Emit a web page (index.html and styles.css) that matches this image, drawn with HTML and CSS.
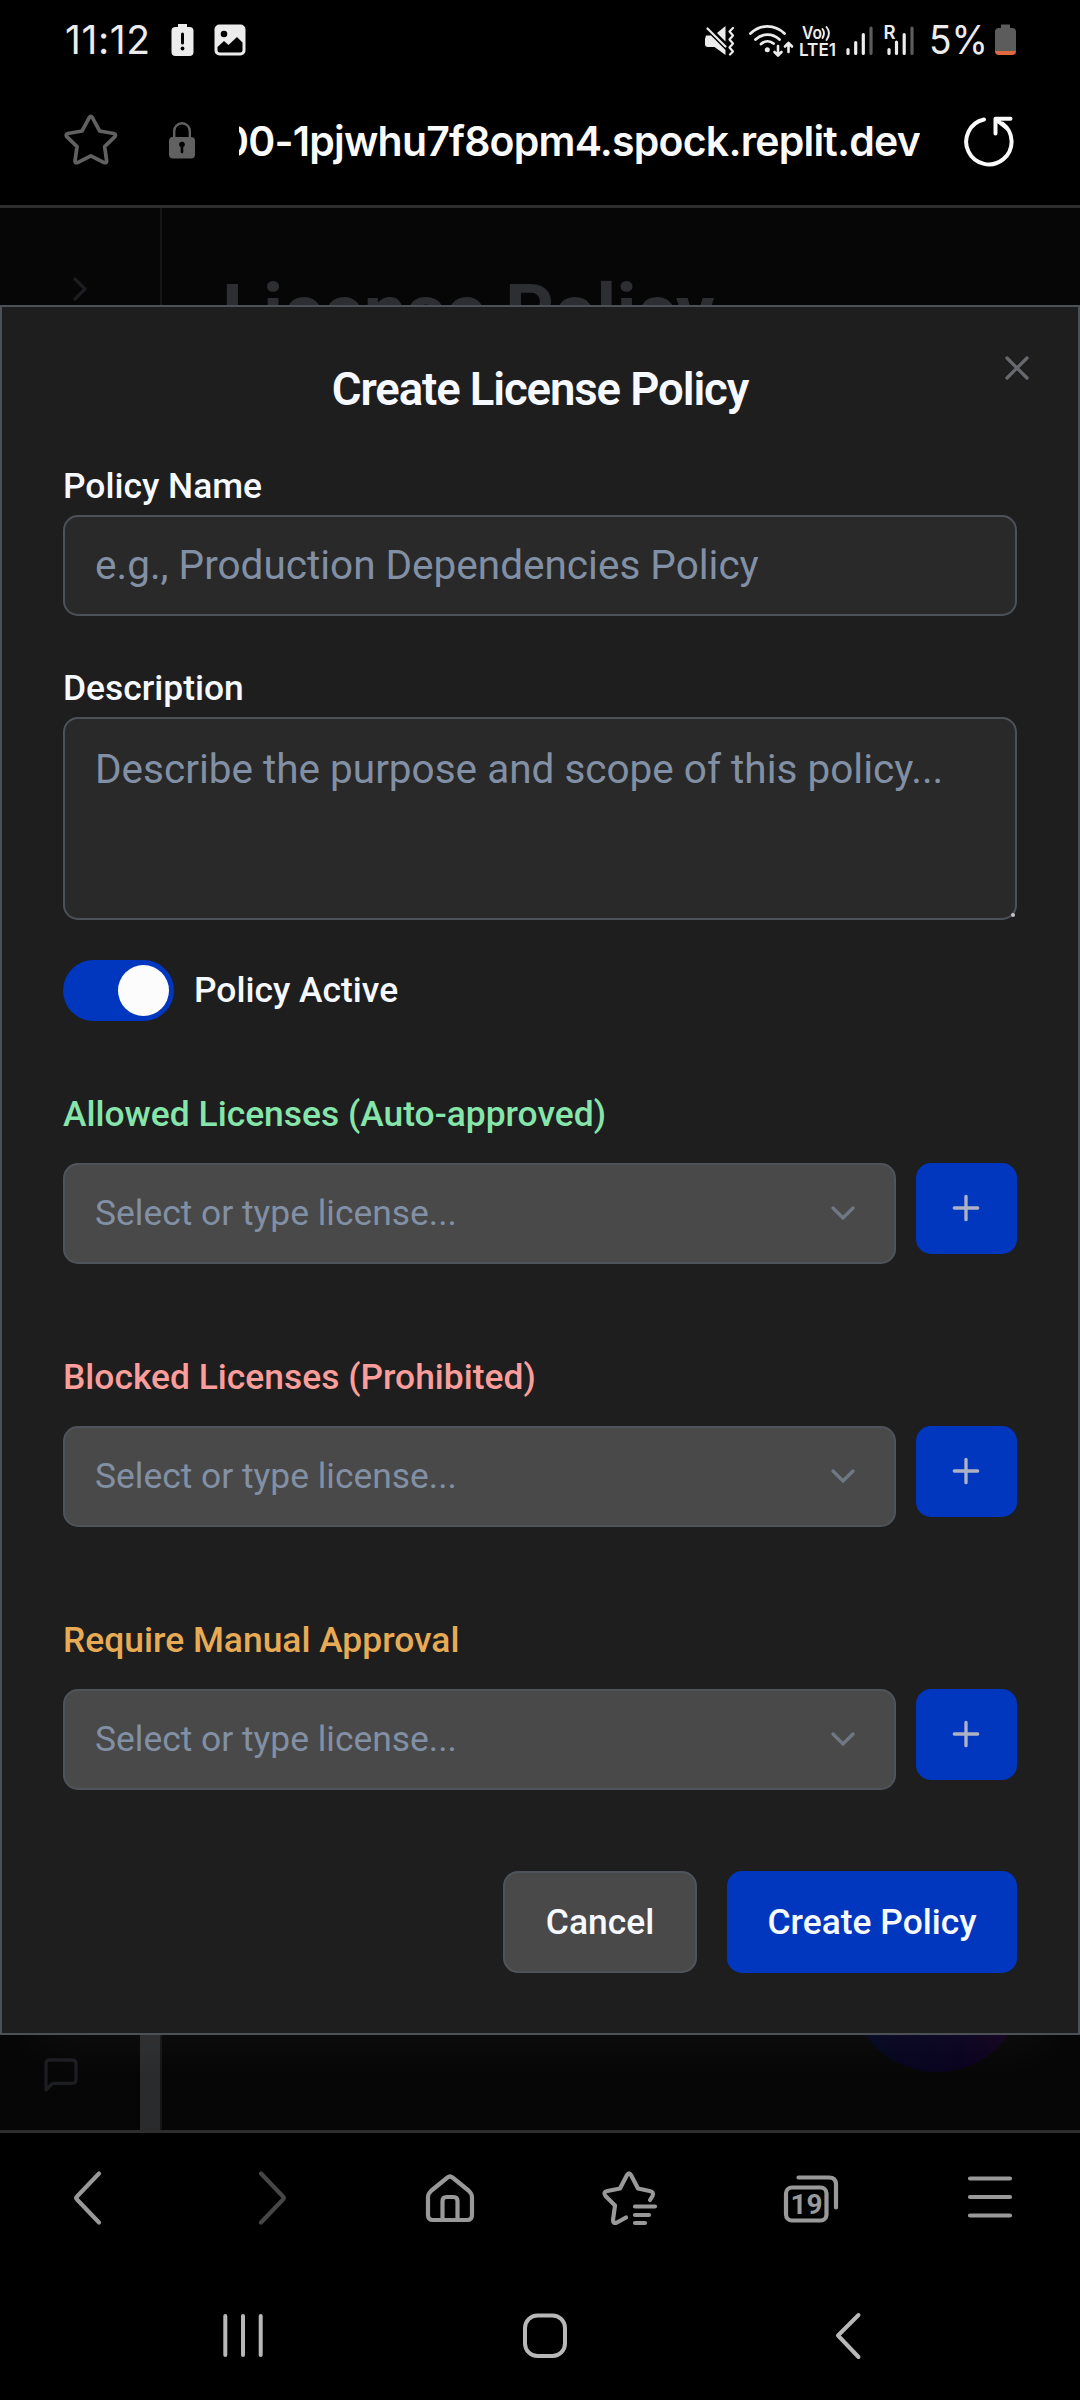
FILE: index.html
```html
<!DOCTYPE html>
<html lang="en">
<head>
<meta charset="utf-8">
<title>License Policy</title>
<link rel="stylesheet" href="styles.css">
</head>
<body>
<div class="status-bar">
  <span class="clock">11:12</span>
  <svg class="status-alert" width="23" height="34" viewBox="0 0 23 34"><path fill="#ececec" d="M7 1h9v3h2.500a4 4 0 0 1 4 4v21a4 4 0 0 1-4 4h-14a4 4 0 0 1-4-4V8a4 4 0 0 1 4-4H7z"/><path stroke="#000" stroke-width="3" stroke-linecap="round" d="M11.500 11v9"/><circle cx="11.500" cy="25.500" r="1.900"/></svg>
  <svg class="status-image" width="32" height="32" viewBox="0 0 32 32"><rect x=".5" y=".5" width="31" height="31" rx="5" fill="#ececec"/><circle cx="10" cy="10" r="3.300"/><path d="M3.500 23l6.500-6 4.500 4 8.500-8 5.500 5.500V26a2.500 2.500 0 0 1-2.500 2.500H6A2.500 2.500 0 0 1 3.500 26z"/></svg>
  <svg class="status-icons" width="330" height="60" viewBox="0 0 330 60">
    <g fill="#ececec">
      <path d="M11 25.500h5L30.500 40v5L19.500 37H13a3 3 0 0 1-3-3v-5zM22 23l8.500-7v15.500z"/>
    </g>
    <g fill="none" stroke="#ececec" stroke-linecap="round" stroke-linejoin="round">
      <path stroke-width="2.200" d="M12.500 18.500l18 18"/>
      <path stroke-width="2.200" d="M38 18l-3.500 3.500 3.500 4-3.500 4 3.500 4-3.500 4 3.500 4-3 3"/>
      <path stroke-width="2.800" d="M55.500 23.500c10-9.500 24-9.500 34 0M60.500 29.500c7-6.500 17-6.500 24 0M66 34c4-3.500 9-3.500 12.500-.5"/>
      <path stroke-width="2.600" d="M83 36v9M79.500 42l3.500 3.500 3.500-3.500M93.500 42v-9M90 36.500l3.500-3.500 3.500 3.500"/>
      <path stroke-width="1.900" d="M127.500 19q3 4 0 9M131.500 17q5 6 0 13"/>
      <path stroke-width="3.200" d="M153 39.500v4M160.700 32.500v11M168.300 24.500v19M194 39.500v4M201.500 32v11.500M209.200 24.500v19"/>
      <path stroke="#5c5c5c" stroke-width="3.200" d="M176 18v25.500M217 18v25.500"/>
    </g>
    <circle cx="72.300" cy="39.800" r="2.500" fill="#ececec"/>
    <g class="status-text">
      <text x="107" y="29" font-size="17.500" textLength="20" lengthAdjust="spacingAndGlyphs">Vo</text>
      <text x="104" y="46" font-size="17.500" textLength="37" lengthAdjust="spacingAndGlyphs">LTE1</text>
      <text x="188.500" y="29" font-size="18.500">R</text>
      <text class="percent" x="234" y="44" font-size="39" textLength="59" lengthAdjust="spacingAndGlyphs">5%</text>
    </g>
    <path fill="#5c5c5c" d="M306 14.500h9V18h2a4 4 0 0 1 4 4v19h-21V22a4 4 0 0 1 4-4h2z"/>
    <path fill="#df6a40" d="M300 41h21a4 4 0 0 1-4 4h-13a4 4 0 0 1-4-4z"/>
  </svg>
</div>
<div class="address-bar">
  <svg class="bookmark" width="56" height="56" viewBox="0 0 56 56"><path fill="none" stroke="#616161" stroke-width="4" stroke-linejoin="round" d="M25.300 4.500q1.700-3 3.400 0L36.500 19l15.500 2.700q3 1 1.200 3.500L42 36l2.200 15.500q0 2.800-2.800 1.800L27 46l-14.400 7.300q-2.800 1-2.800-1.800L12 36 .8 25.200Q-1 22.700 2 21.700L17.500 19z" transform="translate(3 .5) scale(.92)"/></svg>
  <svg class="lock" width="28" height="38" viewBox="0 0 28 38"><path fill="none" stroke="#616161" stroke-width="2.400" d="M6.200 16V9a7.800 7.800 0 0 1 15.600 0v7"/><rect x="1" y="15" width="26" height="21.500" rx="4" fill="#616161"/><circle cx="14" cy="22.500" r="2.800"/><path stroke="#000" stroke-width="2.600" stroke-linecap="round" d="M14 24v6"/></svg>
  <div class="url"><span>00-1pjwhu7f8opm4.spock.replit.dev</span></div>
  <svg class="reload" width="52" height="52" viewBox="0 0 52 52" fill="none" stroke="#fafafa" stroke-width="4" stroke-linecap="round" stroke-linejoin="round"><path d="M21 4.500a22.700 22.700 0 1 0 18.500 4"/><path d="M32.500 18.500V3.800H47.500M33 4.500l10 8"/></svg>
</div>

<main class="page">
  <aside class="sidebar">
    <svg class="expand" width="40" height="40" viewBox="0 0 24 24"><path d="M9 18l6-6-6-6"/></svg>
    <svg class="chat" width="40" height="40" viewBox="0 0 24 24"><path d="M21 15a2 2 0 0 1-2 2H7l-4 4V5a2 2 0 0 1 2-2h14a2 2 0 0 1 2 2z"/></svg>
  </aside>
  <div class="scroll-thumb"></div>
  <h1 class="page-title">License Policy</h1>
  <div class="fab"></div>

  <form class="dialog">
    <button type="button" class="close" aria-label="Close"><svg width="40" height="40" viewBox="0 0 24 24"><path d="M18 6L6 18M6 6l12 12"/></svg></button>
    <h2>Create License Policy</h2>
    <div class="field">
      <label for="name">Policy Name</label>
      <input id="name" class="control" placeholder="e.g., Production Dependencies Policy">
    </div>
    <div class="field">
      <label for="desc">Description</label>
      <div class="area"><textarea id="desc" class="control" placeholder="Describe the purpose and scope of this policy..."></textarea><i class="grip"></i></div>
    </div>
    <div class="toggle-row"><span class="switch"><i></i></span><span>Policy Active</span></div>

    <section class="licenses allowed">
      <h3>Allowed Licenses (Auto-approved)</h3>
      <div class="picker">
        <div class="select"><span>Select or type license...</span><svg width="40" height="40" viewBox="0 0 24 24"><path d="M6 9l6 6 6-6"/></svg></div>
        <button type="button" class="add" aria-label="Add"><svg width="40" height="40" viewBox="0 0 24 24"><path d="M5 12h14M12 5v14"/></svg></button>
      </div>
    </section>
    <section class="licenses blocked">
      <h3>Blocked Licenses (Prohibited)</h3>
      <div class="picker">
        <div class="select"><span>Select or type license...</span><svg width="40" height="40" viewBox="0 0 24 24"><path d="M6 9l6 6 6-6"/></svg></div>
        <button type="button" class="add" aria-label="Add"><svg width="40" height="40" viewBox="0 0 24 24"><path d="M5 12h14M12 5v14"/></svg></button>
      </div>
    </section>
    <section class="licenses manual">
      <h3>Require Manual Approval</h3>
      <div class="picker">
        <div class="select"><span>Select or type license...</span><svg width="40" height="40" viewBox="0 0 24 24"><path d="M6 9l6 6 6-6"/></svg></div>
        <button type="button" class="add" aria-label="Add"><svg width="40" height="40" viewBox="0 0 24 24"><path d="M5 12h14M12 5v14"/></svg></button>
      </div>
    </section>

    <div class="actions">
      <button type="button" class="btn cancel">Cancel</button>
      <button type="button" class="btn create">Create Policy</button>
    </div>
  </form>
</main>

<nav class="toolbar">
  <svg width="64" height="64" viewBox="0 0 64 64"><path d="M41 7.500L19 30.500q-1.500 1.500 0 3L41 56.500"/></svg>
  <svg class="disabled" width="64" height="64" viewBox="0 0 64 64"><path d="M23 7.500L45 30.500q1.500 1.500 0 3L23 56.500"/></svg>
  <svg width="64" height="64" viewBox="0 0 64 64"><path d="M29.500 11.500q2.500-2 5 0L50.500 24.500q3.500 3 3.500 7V49q0 5-5 5H15q-5 0-5-5V31.500q0-4 3.500-7zM24.500 54V35q0-4 4-4h7q4 0 4 4V54"/></svg>
  <svg width="64" height="64" viewBox="-2 0 64 64"><path d="M48.500 34l2.500-4q2-4-3-5L36.500 22.500 29.500 9q-2-3.500-4 0L18.500 22.500 6 25q-5 1-2 5L13.500 39.500 11.500 54q0 4 4 2.500L24.500 51.500" transform="translate(1.500 0)"/><path d="M35 40.500h20M35 49h14M35 57h10"/></svg>
  <svg width="64" height="64" viewBox="-2 0 64 64"><rect x="6" y="21.500" width="40.500" height="33" rx="6"/><path d="M18.500 11.500H49q7 0 7 7V41.500"/><text x="26.500" y="48" text-anchor="middle">19</text></svg>
  <svg width="64" height="64" viewBox="0 0 64 64"><path d="M12 12.500h40M12 31h40M12 49.500h40"/></svg>
</nav>
<nav class="system-nav">
  <svg width="64" height="64" viewBox="0 0 64 64"><path d="M14.300 12v39M32 12v39M49.700 12v39"/></svg>
  <svg width="64" height="64" viewBox="0 0 64 64"><rect x="12" y="11.500" width="40" height="40.500" rx="12.500"/></svg>
  <svg width="64" height="64" viewBox="0 0 64 64"><path d="M43.500 11L23 31.500 43.500 53"/></svg>
</nav>
</body>
</html>
```
FILE: styles.css
```css
* { box-sizing: border-box; }
body {
  margin: 0;
  width: 1080px;
  height: 2400px;
  overflow: hidden;
  background: #000;
  font-family: Roboto, "Liberation Sans", sans-serif;
  display: flex;
  flex-direction: column;
}
svg { display: block; flex: none; }
h1, h2, h3 { margin: 0; }
button { padding: 0; border: 0; font-family: inherit; }

/* Phone status bar */
.status-bar {
  height: 80px;
  display: flex;
  align-items: center;
  padding-left: 65px;
}
.clock {
  width: 106px;
  font: 400 39px/40px Inter, sans-serif;
  letter-spacing: 0.6px;
  color: #ececec;
}
.status-image { margin-left: 20px; }
.status-icons { margin-left: 449px; }
.status-text { fill: #ececec; font-family: Inter, sans-serif; font-weight: 600; }
.status-text .percent { font-weight: 400; }

/* Address bar */
.address-bar {
  height: 128px;
  padding: 0 0 3px 63px;
  border-bottom: 3px solid #2d2d2d;
  display: flex;
  align-items: center;
}
.lock { margin-left: 49px; }
.url {
  width: 681px;
  margin-left: 43px;
  display: flex;
  justify-content: flex-end;
  overflow: hidden;
  font: 600 41px/60px Inter, sans-serif;
  letter-spacing: -0.8px;
  color: #fafafa;
  white-space: nowrap;
}
.reload { margin-left: 43px; }

/* Web page behind the dialog */
.page {
  position: relative;
  height: 1922px;
  background: #060606;
  overflow: hidden;
}
.sidebar {
  width: 162px;
  height: 100%;
  border-right: 2px solid #151515;
  display: flex;
  flex-direction: column;
  justify-content: space-between;
  padding: 61px 41px 35px 60px;
}
.sidebar svg { fill: none; stroke: #1c1d20; stroke-width: 2; stroke-linecap: round; stroke-linejoin: round; }
.sidebar .chat { margin-left: -19px; }
.scroll-thumb { position: absolute; left: 140px; bottom: 0; width: 20px; height: 400px; background: #2a2b2c; }
.page-title {
  position: absolute;
  left: 222px;
  top: 60px;
  font-size: 75.9px;
  line-height: 90px;
  color: #2d2e32;
  white-space: nowrap;
}
.fab {
  position: absolute;
  left: 849px;
  bottom: 58px;
  width: 176px;
  height: 176px;
  border-radius: 50%;
  background: linear-gradient(90deg, #030720, #09021f 65%, #14021a);
}

/* Dialog */
.dialog {
  position: absolute;
  top: 97px;
  left: 0;
  width: 1080px;
  height: 1730px;
  padding: 60px 61px 0;
  border: 2px solid #4c5157;
  background: #1e1e1e;
  box-shadow: 0 45px 50px -30px rgba(255, 255, 255, 0.04);
  color: #f6f9ff;
}
.close {
  position: absolute;
  top: 41px;
  right: 41px;
  background: none;
  color: #67696f;
}
.close svg, .select svg, .add svg { fill: none; stroke: currentColor; stroke-width: 2; stroke-linecap: round; }
.dialog h2 {
  font-size: 45.5px;
  line-height: 46px;
  font-weight: 600;
  letter-spacing: -1.1px;
  text-align: center;
}
.field { margin-top: 55px; }
h2 + .field { margin-top: 56px; }
.field label, .toggle-row, .licenses h3, .btn {
  font-size: 35.4px;
  line-height: 35px;
  font-weight: 500;
}
.field label { display: block; margin-bottom: 11px; }
.control {
  display: block;
  width: 100%;
  height: 101px;
  padding: 0 30px 2px;
  border: 2px solid #4d5259;
  border-radius: 15px;
  background: #292929;
  font: 400 40.5px/60px Roboto, "Liberation Sans", sans-serif;
  color: #f6f9ff;
}
.control::placeholder { color: #8290a5; opacity: 1; }
.area { position: relative; }
textarea.control { height: 203px; padding-top: 20px; resize: none; overflow: hidden; }
.grip {
  position: absolute;
  right: 2px;
  bottom: 3px;
  width: 4px;
  height: 4px;
  border-radius: 2px;
  background: #c4c4c4;
}
.toggle-row { display: flex; align-items: center; gap: 20px; height: 61px; margin-top: 40px; }
.switch { width: 111px; height: 61px; padding: 5px; border-radius: 31px; background: #0136bf; display: flex; justify-content: flex-end; }
.switch i { width: 51px; height: 51px; border-radius: 50%; background: #fcfcfc; }

.licenses { margin-top: 96px; }
.allowed { margin-top: 76px; }
.licenses h3 { margin-bottom: 31px; }
.allowed h3 { color: #86e5aa; }
.blocked h3 { color: #fa9d9b; }
.manual h3 { color: #e8ab55; }
.picker { display: flex; align-items: flex-start; gap: 20px; }
.select {
  flex: 1;
  height: 101px;
  display: flex;
  align-items: center;
  justify-content: space-between;
  padding: 0 31px 1px 30px;
  border: 2px solid #4f545b;
  border-radius: 15px;
  background: #494949;
  font-size: 35.4px;
  color: #8290a5;
}
.select svg { color: #6f7884; }
.add {
  width: 101px;
  height: 91px;
  padding: 0 1px 1px 0;
  border-radius: 15px;
  background: #0136bf;
  color: #adb3c4;
  display: grid;
  place-items: center;
}

.actions { display: flex; justify-content: flex-end; gap: 30px; margin-top: 81px; }
.btn { height: 102px; border-radius: 15px; color: #f6f9ff; }
.cancel { width: 194px; background: #494949; border: 2px solid #4f545b; }
.create { width: 290px; background: #0136bf; }

/* Browser toolbar and Android navigation */
.toolbar {
  height: 133px;
  border-top: 3px solid #2d2d2d;
  display: grid;
  grid-template-columns: repeat(6, 180px);
  place-items: center;
}
.toolbar svg { fill: none; stroke: #999; stroke-width: 4.2; stroke-linecap: round; stroke-linejoin: round; }
.toolbar .disabled { stroke: #474747; }
.toolbar text { fill: #999; stroke: none; font: 700 28px Roboto, sans-serif; }
.system-nav {
  height: 137px;
  padding: 9px 82px 0 92px;
  display: grid;
  grid-template-columns: repeat(3, 302px);
  place-items: center;
}
.system-nav svg { fill: none; stroke: #b8b8b8; stroke-width: 4; stroke-linecap: round; stroke-linejoin: round; }
```
